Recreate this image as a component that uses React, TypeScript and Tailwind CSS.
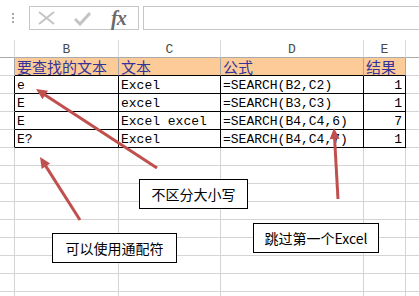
import React from "react";

type Kind = "hdr" | "orange" | "data" | "empty";

const colWidths = ["w-[15px]", "w-[104px]", "w-[102px]", "w-[143px]", "w-[42px]", "w-[13px]"];

function cellClass(kind: Kind, col: number): string {
  const last = col === 5;
  if (kind === "hdr") {
    return last
      ? "border-b border-b-[#ababab]"
      : "border-r border-b border-r-[#dadada] border-b-[#ababab]";
  }
  if (kind === "orange") {
    if (col === 0) return "border-r border-b border-r-[#a6a6a6] border-b-[#d4d4d4]";
    if (last) return "border-b border-b-[#d4d4d4]";
    return "bg-[#fdcb98] border-r border-b border-r-[#a6a6a6] border-b-black";
  }
  if (kind === "data") {
    if (col === 0) return "border-r border-b border-r-black border-b-[#d4d4d4]";
    if (last) return "border-b border-b-[#d4d4d4]";
    return "border-r border-b border-r-black border-b-black";
  }
  return last ? "border-b border-b-[#d4d4d4]" : "border-r border-b border-r-[#d4d4d4] border-b-[#d4d4d4]";
}

const mono = "font-['Liberation_Mono',monospace] text-[13px]";
const cjk = "font-['Noto_Sans_CJK_SC','Noto_Sans',sans-serif]";

function Row({ kind, cells }: { kind: Kind; cells?: (string | null)[] }) {
  return (
    <div className="flex h-[18px]">
      {colWidths.map((w, i) => {
        const content = cells ? cells[i] : null;
        let inner: React.ReactNode = null;
        if (content !== null && content !== undefined) {
          if (kind === "hdr") {
            inner = (
              <div className={`${mono} text-[#4a4a4a] text-center leading-[17px] pt-[1px]`}>{content}</div>
            );
          } else if (kind === "orange") {
            inner = (
              <div className={`${cjk} text-[15px] text-[#333399] leading-[17px] pl-[2px] whitespace-nowrap`}>{content}</div>
            );
          } else {
            inner = (
              <div
                className={`${mono} text-black leading-[17px] pt-[1px] whitespace-pre ${
                  i === 4 ? "text-right pr-[3px]" : "pl-[2px]"
                }`}
              >
                {content}
              </div>
            );
          }
        }
        return (
          <div key={i} className={`${w} shrink-0 overflow-visible ${cellClass(kind, i)}`}>
            {inner}
          </div>
        );
      })}
    </div>
  );
}

function Arrow({ t, p }: { t: [number, number]; p: [number, number] }) {
  const dx = p[0] - t[0];
  const dy = p[1] - t[1];
  const len = Math.hypot(dx, dy);
  const ux = dx / len;
  const uy = dy / len;
  const L = 11;
  const H = 5;
  const bx = p[0] - ux * L;
  const by = p[1] - uy * L;
  const nx = -uy;
  const ny = ux;
  const pts = `${p[0]},${p[1]} ${bx + nx * H},${by + ny * H} ${bx - nx * H},${by - ny * H}`;
  return (
    <g>
      <line x1={t[0]} y1={t[1]} x2={bx + ux * 2} y2={by + uy * 2} stroke="#c0504d" strokeWidth={3} />
      <polygon points={pts} fill="#c0504d" />
    </g>
  );
}

export default function App() {
  const dataRows: (string | null)[][] = [
    [null, "e", "Excel", "=SEARCH(B2,C2)", "1", null],
    [null, "E", "excel", "=SEARCH(B3,C3)", "1", null],
    [null, "E", "Excel excel", "=SEARCH(B4,C4,6)", "7", null],
    [null, "E?", "Excel", "=SEARCH(B4,C4,7)", "1", null],
  ];
  return (
    <div className="relative w-[419px] h-[296px] overflow-hidden bg-white">
      {/* formula bar */}
      <div className="h-[40px] flex items-start pt-[6px]">
        <div className="w-[29px] shrink-0 flex flex-col gap-[2px] pl-[12px] pt-[7px]">
          <div className="w-[2px] h-[2px] bg-[#a8a8a8]" />
          <div className="w-[2px] h-[2px] bg-[#a8a8a8]" />
          <div className="w-[2px] h-[2px] bg-[#a8a8a8]" />
        </div>
        <div className="w-[110px] h-[24px] shrink-0 border border-[#c6c6c6] flex items-center">
          <svg width="17" height="14" viewBox="0 0 17 14" className="ml-[8px]">
            <line x1="1" y1="1" x2="16" y2="13" stroke="#c4c4c4" strokeWidth="2" />
            <line x1="16" y1="1" x2="1" y2="13" stroke="#c4c4c4" strokeWidth="2" />
          </svg>
          <svg width="17" height="14" viewBox="0 0 17 14" className="ml-[19px] mt-[2px]">
            <polyline points="1,7 6,12 16,1" fill="none" stroke="#c4c4c4" strokeWidth="3" />
          </svg>
          <div className="ml-[20px] font-['Liberation_Serif',serif] italic font-bold text-[20px] leading-[20px] text-[#6a6a6a] tracking-[-1px]">
            fx
          </div>
        </div>
        <div className="ml-[4px] w-[300px] h-[24px] shrink-0 border border-[#c6c6c6]" />
      </div>

      {/* grid */}
      <Row kind="hdr" cells={[null, "B", "C", "D", "E", null]} />
      <Row kind="orange" cells={[null, "要查找的文本", "文本", "公式", "结果", null]} />
      {dataRows.map((r, i) => (
        <Row key={i} kind="data" cells={r} />
      ))}
      {Array.from({ length: 9 }).map((_, i) => (
        <Row key={`e${i}`} kind="empty" />
      ))}

      {/* arrows */}
      <svg className="absolute left-0 top-0 pointer-events-none" width="419" height="296">
        <Arrow t={[157, 168]} p={[36, 89]} />
        <Arrow t={[80, 220]} p={[40, 157]} />
        <Arrow t={[338, 199]} p={[334, 128]} />
      </svg>

      {/* callout boxes */}
      <div
        className={`absolute left-[139px] top-[179px] w-[109px] h-[30px] bg-white border border-black flex items-center justify-center ${cjk} text-[14px] text-black`}
      >
        不区分大小写
      </div>
      <div
        className={`absolute left-[52px] top-[233px] w-[125px] h-[30px] bg-white border border-black flex items-center justify-center ${cjk} text-[14px] text-black`}
      >
        可以使用通配符
      </div>
      <div
        className={`absolute left-[253px] top-[223px] w-[126px] h-[30px] bg-white border border-black flex items-center justify-center ${cjk} text-[14px] text-black`}
      >
        跳过第一个Excel
      </div>
    </div>
  );
}
